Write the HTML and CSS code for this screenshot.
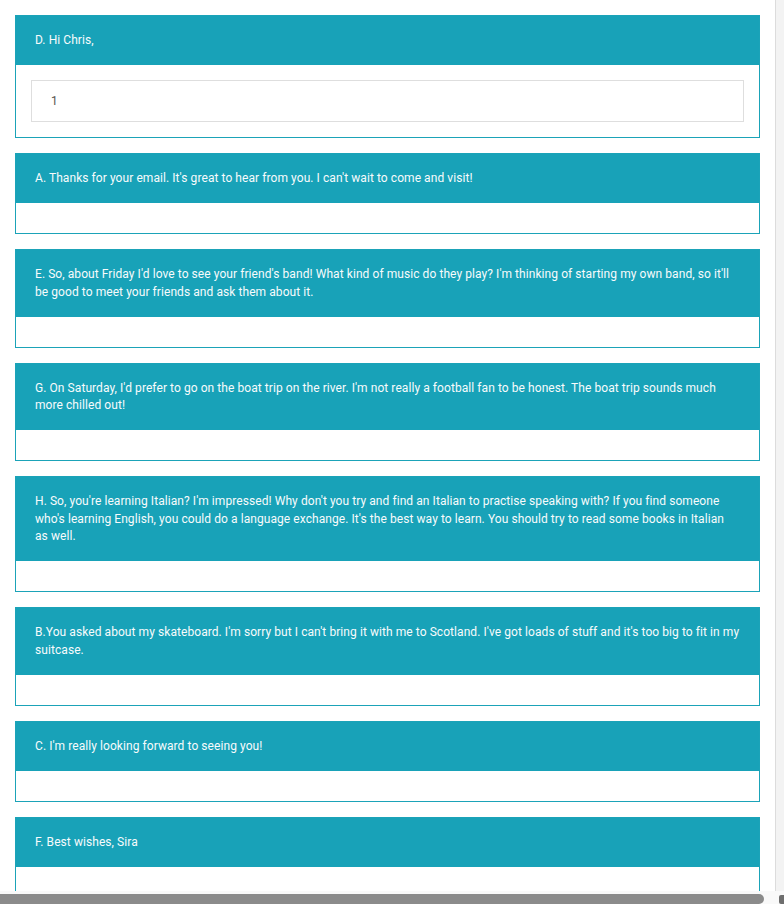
FILE: index.html
```html
<!DOCTYPE html>
<html lang="en">
<head>
<meta charset="utf-8">
<title>Letter order</title>
<link rel="stylesheet" href="styles.css">
</head>
<body>
<div class="window">
  <main class="content">
    <section class="card">
      <div class="card-head">D. Hi Chris,</div>
      <div class="card-body"><div class="answer">1</div></div>
    </section>
    <section class="card">
      <div class="card-head">A. Thanks for your email. It's great to hear from you. I can't wait to come and visit!</div>
      <div class="card-body"></div>
    </section>
    <section class="card">
      <div class="card-head">E. So, about Friday I'd love to see your friend's band! What kind of music do they play? I'm thinking of starting my own band, so it'll be good to meet your friends and ask them about it.</div>
      <div class="card-body"></div>
    </section>
    <section class="card">
      <div class="card-head">G. On Saturday, I'd prefer to go on the boat trip on the river. I'm not really a football fan to be honest. The boat trip sounds much more chilled out!</div>
      <div class="card-body"></div>
    </section>
    <section class="card">
      <div class="card-head">H. So, you're learning Italian? I'm impressed! Why don't you try and find an Italian to practise speaking with? If you find someone who's learning English, you could do a language exchange. It's the best way to learn. You should try to read some books in Italian as well.</div>
      <div class="card-body"></div>
    </section>
    <section class="card">
      <div class="card-head">B.You asked about my skateboard. I'm sorry but I can't bring it with me to Scotland. I've got loads of stuff and it's too big to fit in my suitcase.</div>
      <div class="card-body"></div>
    </section>
    <section class="card">
      <div class="card-head">C. I'm really looking forward to seeing you!</div>
      <div class="card-body"></div>
    </section>
    <section class="card">
      <div class="card-head">F. Best wishes, Sira</div>
      <div class="card-body"></div>
    </section>
  </main>
  <div class="vrail"></div>
  <div class="hbar">
    <div class="hthumb"></div>
    <div class="harrow"></div>
  </div>
</div>
</body>
</html>
```

FILE: styles.css
```css
html, body {
  margin: 0;
  padding: 0;
  background: #ffffff;
}

body {
  font-family: Roboto, "Liberation Sans", Arial, sans-serif;
  font-size: 12px;
}

.window {
  width: 784px;
  height: 904px;
  display: grid;
  grid-template-columns: 775px 9px;
  grid-template-rows: 891px 13px;
  overflow: hidden;
}

.content {
  overflow: hidden;
  padding: 15px 15px 0 15px;
  display: flex;
  flex-direction: column;
  gap: 15px;
}

.card {
  border: 1px solid #1ba3b8;
  background: #ffffff;
  flex: none;
}

.card-head {
  background: #18a2b8;
  color: #f7fbfc;
  padding: 16px 19.6px 15.5px 19px;
  line-height: 17.5px;
  font-size: 12px;
  letter-spacing: 0.07px;
}

.card-body {
  padding: 15px;
}

.answer {
  height: 40px;
  border: 1px solid #dedede;
  padding: 0 19px;
  line-height: 40px;
  color: #5a5550;
  font-size: 12px;
}

.vrail {
  background: #f3f3f3;
  border-left: 1px solid #dcdcdc;
}

.hbar {
  grid-column: 1 / 3;
  background: #f9f9f9;
  display: flex;
  align-items: flex-end;
}

.hthumb {
  width: 764px;
  height: 10px;
  background: #8b8b8b;
  border-radius: 0 5px 5px 0;
}

.harrow {
  width: 5px;
  height: 9px;
  margin-left: 15px;
  background: #6e6e6e;
  border-radius: 2px 0 0 2px;
}
```
